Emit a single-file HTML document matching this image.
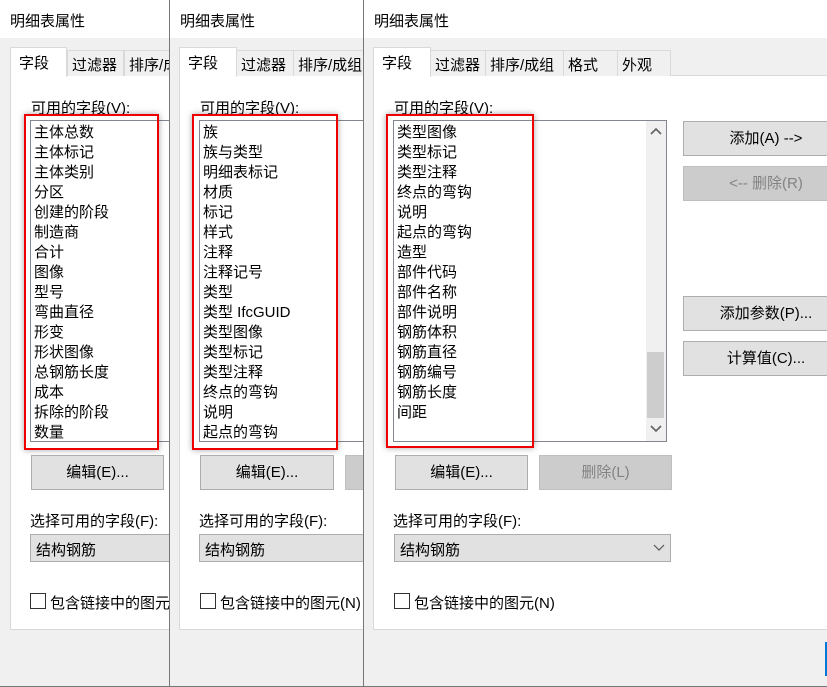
<!DOCTYPE html>
<html><head><meta charset="utf-8"><style>
*{margin:0;padding:0;box-sizing:border-box}
body{width:827px;height:687px;overflow:hidden;background:#f0f0f0;font-family:"Liberation Sans","Microsoft YaHei","Noto Sans CJK SC",sans-serif;font-size:15px;color:#000;position:relative}
.p{position:absolute;top:0;height:687px;overflow:hidden;background:#f0f0f0;border-left:1px solid #777;border-bottom:1px solid #777}
.a{position:absolute;white-space:nowrap}
.title{left:0;top:0;right:0;height:38px;background:#fff;padding:10px 0 0 10px}
.tab{top:50px;height:26px;background:#f0f0f0;border:1px solid #d9d9d9;border-bottom:none;padding:3px 0 0 4px}
.tab.sel{top:47px;height:30px;background:#fff;padding:4px 0 0 8px;z-index:2}
.cont{top:75px;height:555px;background:#fff;border:1px solid #d9d9d9}
.list{top:120px;height:322px;background:#fff;border:1px solid #828790;padding:2px 0 0 3px;line-height:20px}
.red{top:114px;height:336px;border:2px solid #e00;box-shadow:0 0 6px rgba(0,0,0,.35)}
.btn{height:35px;background:#e1e1e1;border:1px solid #adadad;text-align:center;line-height:34px}
.dis{background:#cccccc;border-color:#bfbfbf;color:#838383}
.combo{top:534px;height:28px;background:#e1e1e1;border:1px solid #adadad;padding:4px 0 0 5px}
.cb{top:593px;width:16px;height:16px;border:1px solid #333;background:#fff}
</style></head><body>

<!-- panel 1 -->
<div class="p" style="left:0;width:170px;border-left:none">
<div class="a title">明细表属性</div>
<div class="a cont" style="left:10px;width:200px"></div>
<div class="a tab sel" style="left:10px;width:57px">字段</div>
<div class="a tab" style="left:67px;width:57px">过滤器</div>
<div class="a tab" style="left:124px;width:80px">排序/成组</div>
<div class="a" style="left:31px;top:97px">可用的字段(V):</div>
<div class="a list" style="left:30px;width:160px">主体总数<br>主体标记<br>主体类别<br>分区<br>创建的阶段<br>制造商<br>合计<br>图像<br>型号<br>弯曲直径<br>形变<br>形状图像<br>总钢筋长度<br>成本<br>拆除的阶段<br>数量</div>
<div class="a red" style="left:24px;width:135px"></div>
<div class="a btn" style="left:31px;top:455px;width:133px">编辑(E)...</div>
<div class="a" style="left:30px;top:510px">选择可用的字段(F):</div>
<div class="a combo" style="left:30px;width:160px">结构钢筋</div>
<div class="a cb" style="left:30px"></div>
<div class="a" style="left:50px;top:592px">包含链接中的图元(N)</div>
</div>

<!-- panel 2 -->
<div class="p" style="left:169px;width:195px">
<div class="a title">明细表属性</div>
<div class="a cont" style="left:9px;width:220px"></div>
<div class="a tab sel" style="left:9px;width:58px">字段</div>
<div class="a tab" style="left:66px;width:58px">过滤器</div>
<div class="a tab" style="left:123px;width:80px">排序/成组</div>
<div class="a" style="left:30px;top:97px">可用的字段(V):</div>
<div class="a list" style="left:29px;width:180px">族<br>族与类型<br>明细表标记<br>材质<br>标记<br>样式<br>注释<br>注释记号<br>类型<br>类型 IfcGUID<br>类型图像<br>类型标记<br>类型注释<br>终点的弯钩<br>说明<br>起点的弯钩</div>
<div class="a red" style="left:22px;width:146px"></div>
<div class="a btn" style="left:30px;top:455px;width:134px">编辑(E)...</div>
<div class="a btn dis" style="left:175px;top:455px;width:60px"></div>
<div class="a" style="left:29px;top:510px">选择可用的字段(F):</div>
<div class="a combo" style="left:29px;width:180px">结构钢筋</div>
<div class="a cb" style="left:30px"></div>
<div class="a" style="left:50px;top:592px">包含链接中的图元(N)</div>
</div>

<!-- panel 3 -->
<div class="p" style="left:363px;width:464px">
<div class="a title">明细表属性</div>
<div class="a cont" style="left:9px;width:470px"></div>
<div class="a tab sel" style="left:9px;width:58px">字段</div>
<div class="a tab" style="left:66px;width:56px">过滤器</div>
<div class="a tab" style="left:121px;width:79px">排序/成组</div>
<div class="a tab" style="left:199px;width:55px">格式</div>
<div class="a tab" style="left:253px;width:54px">外观</div>
<div class="a" style="left:30px;top:97px">可用的字段(V):</div>
<div class="a list" style="left:29px;width:274px">类型图像<br>类型标记<br>类型注释<br>终点的弯钩<br>说明<br>起点的弯钩<br>造型<br>部件代码<br>部件名称<br>部件说明<br>钢筋体积<br>钢筋直径<br>钢筋编号<br>钢筋长度<br>间距</div>
<div class="a" style="left:282px;top:121px;width:20px;height:320px;background:#f0f0f0"></div>
<div class="a" style="left:283px;top:352px;width:17px;height:66px;background:#cdcdcd"></div>
<svg class="a" style="left:286px;top:127px" width="12" height="10"><path d="M1 7 L6 2 L11 7" fill="none" stroke="#606060" stroke-width="1.6"/></svg>
<svg class="a" style="left:286px;top:424px" width="12" height="10"><path d="M1 2 L6 7 L11 2" fill="none" stroke="#606060" stroke-width="1.6"/></svg>
<div class="a red" style="left:22px;width:148px;height:334px"></div>
<div class="a btn" style="left:319px;top:121px;width:166px">添加(A) --&gt;</div>
<div class="a btn dis" style="left:319px;top:166px;width:166px">&lt;-- 删除(R)</div>
<div class="a btn" style="left:319px;top:296px;width:166px">添加参数(P)...</div>
<div class="a btn" style="left:319px;top:341px;width:166px">计算值(C)...</div>
<div class="a btn" style="left:31px;top:455px;width:133px">编辑(E)...</div>
<div class="a btn dis" style="left:175px;top:455px;width:133px">删除(L)</div>
<div class="a" style="left:29px;top:510px">选择可用的字段(F):</div>
<div class="a combo" style="left:30px;width:277px">结构钢筋</div>
<svg class="a" style="left:289px;top:544px" width="12" height="8"><path d="M1 1 L6 6 L11 1" fill="none" stroke="#555" stroke-width="1.2"/></svg>
<div class="a cb" style="left:30px"></div>
<div class="a" style="left:50px;top:592px">包含链接中的图元(N)</div>
<div class="a" style="left:461px;top:642px;width:4px;height:34px;border:2px solid #0078d7;border-right:none;background:#e1e1e1"></div>
</div>
</body></html>
